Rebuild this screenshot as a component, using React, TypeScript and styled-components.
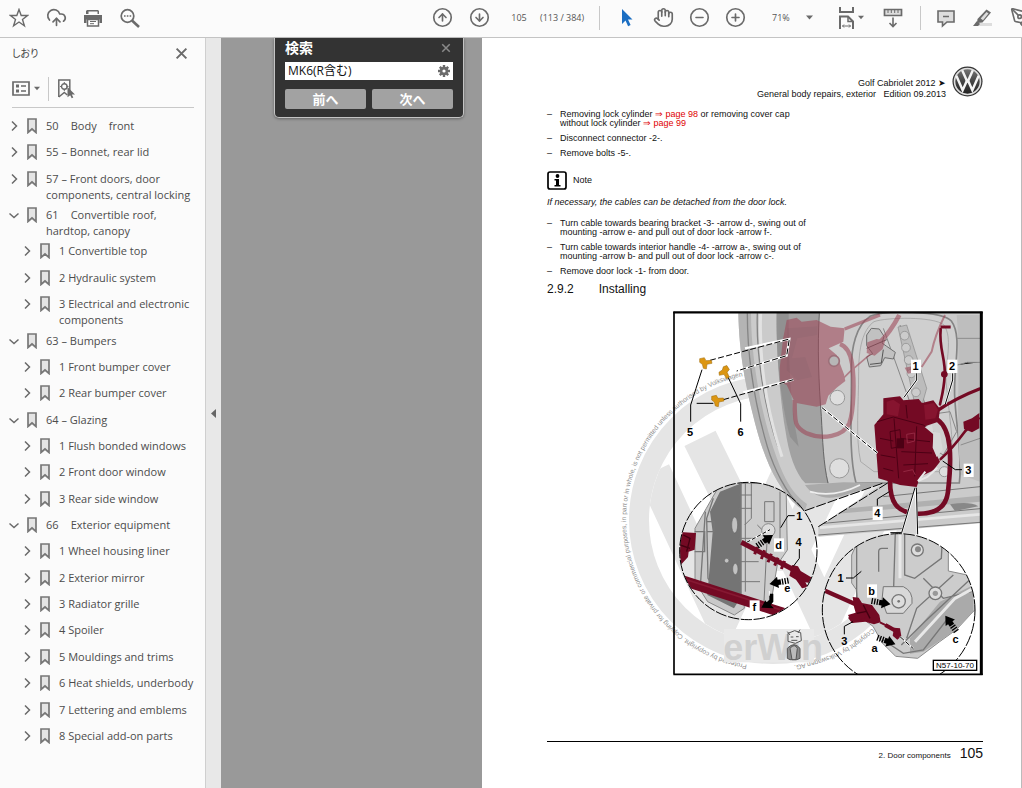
import React from 'react';
import styled, { createGlobalStyle } from 'styled-components';
import { CircleArrowDown, CircleArrowUp, CircleMinus, CirclePlus, CloudUpload, Hand, PenTool } from 'lucide-react';

const ui = '"Open Sans", "Noto Sans CJK JP", sans-serif';
const doc = '"Liberation Sans", Arial, sans-serif';
const ink = '#6a6a6a';

const Global = createGlobalStyle`
  *, *::before, *::after { box-sizing: border-box; }
  body { margin: 0; background: #999; font-family: ${ui}; }
  button, input, select { font: inherit; color: inherit; border: 0; padding: 0; margin: 0; background: none; }
  ul, p, h1, h2, figure { margin: 0; padding: 0; }
  ul { list-style: none; }
  svg { display: block; flex: none; }
`;

const App = styled.div`
  min-height: 100vh;
  display: flex;
  flex-direction: column;
  overflow: hidden;
`;

/* ---------- toolbar ---------- */

const Toolbar = styled.header`
  display: flex;
  align-items: center;
  height: 38px;
  background: #fbfbfb;
  border-bottom: 1px solid #c4c4c4;
  color: ${ink};
  font-size: 9px;
`;

const ToolGroup = styled.div<{ $gap?: number; $push?: boolean }>`
  display: flex;
  align-items: center;
  gap: ${p => p.$gap ?? 0}px;
  margin-left: ${p => (p.$push ? 'auto' : '0')};
  padding-bottom: 2px;
`;

const MainTools = styled(ToolGroup)`
  padding-left: 1px;
`;

const ToolButton = styled.button<{ $width?: number }>`
  display: flex;
  align-items: center;
  justify-content: center;
  gap: 2px;
  width: ${p => p.$width ?? 36}px;
  height: 34px;
  flex: none;
  overflow: hidden;
`;

const CutButton = styled(ToolButton)`
  width: 22px;
  padding-left: 10px;
  justify-content: flex-start;
`;

const PageInput = styled.input`
  width: 42px;
  text-align: center;
  color: #555;
`;

const PageCount = styled.span`
  width: 44px;
  white-space: nowrap;
  color: #555;
`;

const Divider = styled.span<{ $before: number; $after: number }>`
  width: 1px;
  height: 24px;
  margin: 0 ${p => p.$after}px 0 ${p => p.$before}px;
  background: #c8c8c8;
`;

const ZoomField = styled.label`
  display: flex;
  align-items: center;
  width: 64px;
  margin-right: 15px;
  padding-left: 19px;
`;

const ZoomSelect = styled.select`
  appearance: none;
  width: 34px;
  color: #555;
`;

/* ---------- bookmarks panel ---------- */

const Main = styled.main`
  flex: 1;
  display: flex;
`;

const Panel = styled.aside`
  width: 206px;
  flex: none;
  display: flex;
  flex-direction: column;
  background: #fbfbfb;
  border-right: 1px solid #cfcfcf;
  padding-bottom: 36px;
`;

const PanelHead = styled.div`
  display: flex;
  align-items: center;
  justify-content: space-between;
  height: 30px;
  padding: 0 17px 0 12px;
`;

const PanelTitle = styled.h2`
  font-size: 10px;
  font-weight: 400;
  line-height: 16px;
  color: #444;
  font-feature-settings: 'palt';
`;

const PanelTools = styled.div`
  display: flex;
  align-items: center;
  height: 40px;
  margin: 0 11px 8px 12px;
  padding-top: 2px;
  border-bottom: 1px solid #c8c8c8;
`;

const PlainButton = styled.button`
  display: flex;
  align-items: center;
  gap: 4px;
`;

const Bookmarks = styled.ul`
  flex: 1;
  display: flex;
  flex-direction: column;
  justify-content: space-between;
`;

const Row = styled.li<{ $level: number }>`
  display: flex;
  align-items: flex-start;
  min-height: 26px;
  padding: 2px 8px 2px ${p => 8 + p.$level * 13}px;
`;

const Toggle = styled.button`
  display: flex;
  align-items: center;
  justify-content: center;
  width: 12px;
  height: 16px;
  margin-right: 7px;
  flex: none;
`;

const BookmarkLink = styled.a`
  display: flex;
  gap: 9px;
  font-size: 11px;
  line-height: 16px;
  color: #4c4c4c;
  text-decoration: none;
`;

const Collapser = styled.button`
  width: 15px;
  flex: none;
  display: flex;
  align-items: center;
  justify-content: center;
  background: #e8e8e8;
`;

/* ---------- document view ---------- */

const Viewer = styled.section`
  flex: 1;
  display: grid;
  grid-template-columns: minmax(0, 29fr) minmax(0, 60fr);
  background: #999;
`;

const Backdrop = styled.div`
  display: flex;
  justify-content: flex-end;
  align-items: flex-start;
  padding-right: 18px;
`;

const SearchBox = styled.form`
  width: 190px;
  padding: 0 10px 8px;
  background: #333;
  border: 1px solid #c4c4c4;
  border-top: 0;
  border-radius: 0 0 5px 5px;
  box-shadow: 0 1px 3px rgba(0, 0, 0, 0.35);
`;

const SearchHead = styled.div`
  display: flex;
  align-items: center;
  justify-content: space-between;
  height: 24px;
  padding: 0 2px 4px 0;
  color: #fff;
  font-size: 14px;
  font-weight: 700;
  line-height: 20px;
`;

const SearchField = styled.label`
  display: flex;
  align-items: center;
  height: 18px;
  padding: 0 3px;
  background: #fff;
`;

const SearchInput = styled.input`
  flex: 1;
  min-width: 0;
  color: #111;
  font-size: 12px;
  line-height: 18px;
  outline: 0;
`;

const SearchActions = styled.div`
  display: grid;
  grid-template-columns: 1fr 1fr;
  gap: 6px;
  margin-top: 9px;
`;

const SearchButton = styled.button`
  height: 20px;
  border-radius: 2px;
  background: #a2a2a2;
  color: #fff;
  font-size: 13px;
  font-weight: 700;
  line-height: 18px;
`;

const Page = styled.article`
  display: flex;
  flex-direction: column;
  padding: 28px 38px 21px 65px;
  background: #fff;
  border-right: 1px solid #bbb;
  color: #111;
  font-family: ${doc};
  font-size: 9px;
  line-height: 9px;
`;

const PageHead = styled.div`
  display: flex;
  justify-content: flex-end;
  gap: 6px;
  height: 34px;
  margin-bottom: 10px;
`;

const PageTitle = styled.p`
  padding-top: 12px;
  text-align: right;
  line-height: 11px;
`;

const Steps = styled.ul`
  display: flex;
  flex-direction: column;
  gap: 6px;
`;

const Step = styled.li`
  display: flex;
  &::before {
    content: '–';
    width: 13px;
    flex: none;
  }
`;

const PageLink = styled.a`
  color: #e00000;
  text-decoration: none;
`;

const Note = styled.div`
  display: flex;
  align-items: center;
  gap: 6px;
  margin: 13px 0 7px;
`;

const Remark = styled.p`
  margin-bottom: 12px;
  font-style: italic;
  line-height: 10px;
`;

const Heading = styled.h1`
  display: flex;
  gap: 25px;
  margin: 6px 0 14px;
  font-size: 12px;
  font-weight: 400;
  line-height: 14px;
`;

const Figure = styled.figure`
  width: 100%;
  max-width: 364px;
  margin-left: auto;
  margin-bottom: 24px;
`;

const PageFoot = styled.footer`
  display: flex;
  justify-content: flex-end;
  align-items: baseline;
  gap: 9px;
  margin-top: auto;
  border-top: 1px solid #000;
  font-size: 8px;
  line-height: 22px;
`;

const PageNumber = styled.span`
  font-size: 14px;
`;

/* ---------- icons ---------- */

const Caret = ({ size = 7 }: { size?: number }) => (
  <svg width={size} height="5" viewBox="0 0 7 5"><path d="M0 .5h7L3.5 4.5z" fill={ink} /></svg>
);

const StarIcon = () => (
  <svg width="20" height="20" viewBox="0 0 20 20" fill="none" stroke={ink} strokeWidth="1.4">
    <path d="M10 1.500l2.200 6h6.300l-5 3.900 1.900 6.400L10 14l-5.400 3.800 1.900-6.400-5-3.900h6.300z" />
  </svg>
);

const PrintIcon = () => (
  <svg width="20" height="20" viewBox="0 0 20 20">
    <path d="M4 2h11l1 1v3H3V3z" fill={ink} /><path d="M5.500 3.500h9V6h-9z" fill="#fbfbfb" />
    <path d="M1 7h18v8h-2.500v-3.500h-13V15H1z" fill={ink} />
    <path d="M4.500 11.500h11v6.500h-11z" fill="#fff" stroke={ink} strokeWidth="1.500" />
    <path d="M7 13.500h6M7 15.700h4" stroke={ink} />
  </svg>
);

const FindIcon = () => (
  <svg width="20" height="20" viewBox="0 0 20 20" fill="none" stroke={ink}>
    <circle cx="7.500" cy="8" r="6.300" strokeWidth="1.700" />
    <path d="M12 12.500l7 6.500" strokeWidth="2.600" />
    <path d="M4 8h7.500" strokeWidth="1.600" strokeDasharray="1.600 1.200" />
  </svg>
);

const ArrowIcon = () => (
  <svg width="14" height="20" viewBox="0 0 14 20">
    <path d="M2 1l10.500 10.500H8l2.600 5.500-2.500 1.200-2.600-5.600L2 16z" fill="#1b6ec2" />
  </svg>
);

const FitIcon = () => (
  <svg width="18" height="22" viewBox="0 0 18 22" fill="none" stroke={ink} strokeWidth="2">
    <path d="M2 0v5h13V0" />
    <path d="M2 22V9.500h8l5 5V22" /><path d="M10 9.500v5h5" strokeWidth="1.500" />
    <path d="M4.500 19h8M6 17.500L4.500 19 6 20.500M11 17.500l1.500 1.500-1.500 1.500" strokeWidth="1" />
  </svg>
);

const RulerIcon = () => (
  <svg width="20" height="20" viewBox="0 0 20 20" fill="none" stroke={ink}>
    <path d="M1.500 1.500h17v6h-17z" fill="#ddd" strokeWidth="1.700" />
    <path d="M5 2v3M8.300 2v3M11.700 2v3M15 2v3" />
    <path d="M10 9.500v9M6.500 15l3.500 3.500 3.500-3.500" strokeWidth="1.600" />
  </svg>
);

const CommentIcon = () => (
  <svg width="20" height="20" viewBox="0 0 20 20">
    <path d="M2 3h16v11h-7l-4.500 4v-4H2z" fill="#ddd" stroke={ink} strokeWidth="1.600" />
    <path d="M7 8.500h6" stroke={ink} strokeWidth="1.500" />
  </svg>
);

const MarkerIcon = () => (
  <svg width="20" height="20" viewBox="0 0 20 20">
    <path d="M5 15h15v3H3z" fill="#ddd" />
    <path d="M14.500 1.500L19 4.500l-8.500 10-5.500.5.500-4z" fill={ink} />
    <path d="M14.500 4l2 1.500-5.500 6.700-2.300-1.700z" fill="#ddd" />
    <path d="M1 18l4-5 3 3-2 2z" fill={ink} />
  </svg>
);

const CrossIcon = ({ size, color }: { size: number; color: string }) => (
  <svg width={size} height={size} viewBox="0 0 12 12" stroke={color} strokeWidth="1.800">
    <path d="M1.500 1.500l9 9M10.500 1.500l-9 9" />
  </svg>
);

const OptionsIcon = () => (
  <svg width="18" height="15" viewBox="0 0 18 15" stroke={ink}>
    <path d="M1 1h16v13H1z" fill="none" strokeWidth="1.700" />
    <path d="M4 5h3M4 10h3" strokeWidth="3" /><path d="M9 5h5M9 10h5" strokeWidth="1.500" />
  </svg>
);

const FindBookmarkIcon = () => (
  <svg width="18" height="20" viewBox="0 0 18 20">
    <path d="M1.800 18V1h11v13" fill="none" stroke={ink} strokeWidth="1.500" />
    <path d="M1.800 18l5.500-4.500 3 2.500" fill="none" stroke={ink} strokeWidth="1.500" />
    <circle cx="7.300" cy="7.500" r="2.800" fill="none" stroke={ink} strokeWidth="1.400" />
    <path d="M7.300 3v2M7.300 10v2M3 7.500h2M9.500 7.500h2" stroke={ink} />
    <path d="M10.500 8l7.500 7.500h-3.200l1.500 3-1.600.8-1.500-3-2.700 2z" fill={ink} />
  </svg>
);

const BookmarkIcon = () => (
  <svg width="10" height="16" viewBox="0 0 10 16">
    <path d="M1 1h8v13.500L5 11l-4 3.500z" fill="#e4e4e4" stroke="#777" strokeWidth="1.700" />
  </svg>
);

const Chevron = ({ open }: { open?: boolean }) => (
  <svg width="12" height="12" viewBox="0 0 12 12" fill="none" stroke={ink} strokeWidth="1.500">
    <path d={open ? 'M1.500 4.500L6 8.500l4.500-4' : 'M4 1.500L8.500 6 4 10.500'} />
  </svg>
);

const GearIcon = () => (
  <svg width="12" height="12" viewBox="0 0 12 12">
    <g stroke={ink} strokeWidth="2.400"><path d="M6 0v12M0 6h12M1.800 1.800l8.400 8.400M10.200 1.800l-8.400 8.400" /></g>
    <circle cx="6" cy="6" r="4.200" fill={ink} /><circle cx="6" cy="6" r="1.600" fill="#fff" />
  </svg>
);

const InfoIcon = () => (
  <svg width="20" height="19" viewBox="0 0 20 19">
    <rect x="1" y="1" width="18" height="17" rx="2" fill="#fff" stroke="#000" strokeWidth="1.700" />
    <circle cx="10.500" cy="5" r="1.900" />
    <path d="M7.500 8h4.500v6h1.500v1.600h-6V14H9V9.600H7.500z" />
  </svg>
);

const VwLogo = () => (
  <svg width="31" height="31" viewBox="0 0 32 32">
    <defs>
      <linearGradient id="chrome" x1="0" y1="0" x2="0" y2="1">
        <stop offset="0" stopColor="#777" /><stop offset=".5" stopColor="#444" /><stop offset="1" stopColor="#222" />
      </linearGradient>
    </defs>
    <circle cx="16" cy="16" r="15.500" fill="#333" />
    <circle cx="16" cy="16" r="13.400" fill="url(#chrome)" stroke="#ddd" strokeWidth="1.700" />
    <g fill="none" stroke="#f4f4f4" strokeWidth="2.500">
      <path d="M10.500 4.500l5 11h1l5-11" /><path d="M4.500 10l6.500 15 4-9h2l4 9 6.500-15" />
    </g>
  </svg>
);

/* ---------- door lock drawing ---------- */

type LabelProps = { x: number; y: number; boxed?: boolean; children: React.ReactNode };

const Label = ({ x, y, boxed, children }: LabelProps) => (
  <g>
    {boxed && <rect x={x - 14} y={y - 20} width="30" height="40" fill="#fff" />}
    <text x={x} y={y + 12} textAnchor="middle" fontFamily={doc} fontWeight="700" fontSize="33">{children}</text>
  </g>
);

const Bolt = ({ x, y, turn = 0 }: { x: number; y: number; turn?: number }) => (
  <g transform={`translate(${x} ${y}) rotate(${turn})`} fill="#dc9612" stroke="#9c6808" strokeWidth="1.500">
    <path d="M-17-13l14-3 5 9 16-1 2 9-15 3-2 14-9-2-3-12-8-6z" />
  </g>
);

const Arrow = ({ x, y, turn }: { x: number; y: number; turn: number }) => (
  <g transform={`translate(${x} ${y}) rotate(${turn})`}>
    <path d="M28 0L2-17v9h-9V8h9v9z" /><path d="M-12-9V9M-20-9V9M-28-9V9" stroke="#000" strokeWidth="4" />
  </g>
);

const Watermark = () => (
  <g>
    <g fill="none" stroke="#e5e5e5">
      <circle cx="309" cy="645" r="402" strokeWidth="60" />
      <g strokeWidth="104" clipPath="url(#badge)">
        <path d="M90 400l170 345h100l170-345" /><path d="M-50 500l205 440 154-330 154 330 205-440" />
      </g>
    </g>
    <g fill="#8e8e8e" fontFamily={doc} fontSize="20">
      <text>
        <textPath href="#arc">Protected by copyright. Copying for private or commercial purposes, in part or in whole, is not permitted unless authorised by Volkswagen AG.</textPath>
      </text>
      <text textAnchor="end">
        <textPath href="#arcEnd" startOffset="100%">Copyright by Volkswagen AG.</textPath>
      </text>
    </g>
    <rect x="162" y="972" width="270" height="100" fill="#e9e9e9" />
    <text x="160" y="1066" fontFamily={doc} fontWeight="700" fontSize="108" fill="#d0d0d0">erWin</text>
  </g>
);

const Robot = () => (
  <g stroke="#555" strokeWidth="3" fill="#e8e8e8">
    <path d="M354 985l20-8 18 6 2 24-18 8-22-6z" /><path d="M360 990l-8-10M384 984l6-10" />
    <path d="M362 996h8M378 995h8M364 1006h18" fill="none" />
    <path d="M352 1030q20-22 38 0v30l-10 4h-20l-8-4z" fill="#8b8b8b" />
    <path d="M360 1030q14-16 22 0l-4 34h-12z" fill="#bbb" />
  </g>
);

const Door = () => (
  <g>
    <path d="M205 25H930V655L445 695V665L640 535 405 617 385 605C330 560 290 480 262 380 225 240 208 150 205 25z" fill="#cbcbcb" />
    <path d="M205 25h38c0 130 30 330 96 480 20 44 45 75 72 92l-6 20-20-12C330 560 290 480 262 380 225 240 208 150 205 25z" fill="#b4b4b4" />
    <path d="M232 25c0 110 16 250 60 400 20 66 56 140 100 180M262 25c-4 120 20 280 62 400" fill="none" stroke="#858585" strokeWidth="4" />
    <path d="M272 25c-6 160 24 310 64 430" fill="none" stroke="#e2e2e2" strokeWidth="9" />
    <path d="M320 25h128c-6 90-2 200 6 300 4 80 6 150 22 210h-70c-30-30-50-90-60-160-18-110-28-250-26-350z" fill="#a2a2a2" />
    <path d="M320 25h36c0 130 2 260 30 400l-26-30c-26-100-42-230-40-370z" fill="#929292" />
    <path d="M448 25c-6 100-2 210 6 310 4 70 6 140 20 200" fill="none" stroke="#666" strokeWidth="3" />
    <path d="M600 34c-40 26-58 90-56 170 2 100-10 240 14 330h310c10-80-10-170-14-260-4-90 24-180-10-226-26-30-200-34-244-14z" fill="#cfcfcf" stroke="#858585" strokeWidth="5" />
    <path d="M612 50c-34 24-46 80-46 150 0 100-10 200 6 270l40 30h200c30-10 40-60 30-140l-14-130c0-70 20-130-6-170-30-26-170-24-210-10z" fill="none" stroke="#999" strokeWidth="2" />
    <path d="M860 30h70v500l-56-20c-20-120 0-320-14-480z" fill="#bebebe" /><path d="M860 100h70M862 180l30-8h38M872 420l58-20" stroke="#8c8c8c" strokeWidth="3" />
    <path d="M640 70l90 250M690 60l76 240M770 330l70-10 20 60-40 70-50-30z" fill="none" stroke="#888" strokeWidth="3" />
    <path d="M684 66l26-6 60 190-14 50-24-14z" fill="#bcbcbc" stroke="#8a8a8a" strokeWidth="2" />
    {[[704, 92], [708, 128], [716, 165], [724, 205], [738, 262]].map(([x, y]) => (
      <circle key={y} cx={x} cy={y} r="13" fill="#ccc" stroke="#888" strokeWidth="2" />
    ))}
    <path d="M590 90l14-20 24 2 14 22-6 20 14 10 26 18-6 20-26-4-12 24-34 4-8-30 18-10-18-24z" fill="#c2c2c2" stroke="#6f6f6f" strokeWidth="3" />
    <path d="M590 130l60-26M600 178l34-4 6-40" fill="none" stroke="#555" strokeWidth="3" />
    <g fill="#dedede" stroke="#999" strokeWidth="3"><circle cx="508" cy="490" r="29" /><circle cx="502" cy="278" r="22" /><circle cx="823" cy="500" r="15" /></g>
    <path d="M405 540c20 30 60 50 120 30l115-36-120-2z" fill="#aaa" /><path d="M420 560q70 20 150-20" fill="none" stroke="#eee" strokeWidth="5" />
    <path d="M535 610l395-38v18l-430 36z" fill="#b0b0b0" /><path d="M462 655l468-44M445 690l485-38M640 575l290-30" fill="none" stroke="#777" strokeWidth="3" />
    <path d="M450 668l480-40" stroke="#e6e6e6" strokeWidth="8" />
    <path d="M840 598q60-10 85 6l-70 14z" fill="#888" />
  </g>
);

const GhostLock = () => (
  <g opacity=".58">
    <path d="M350 45l30-7 15 12 45-5 42 20 42 5-4 40-44 20 24 20 22 58 4 20-26 20-25 24-8 26-27 7-65-12-25-53-20-10-1-40 10-88z" fill="#9e4858" />
    <path d="M352 70l90-6v26l-60 10-16 60 40-4 20 60-44 10-32-30" fill="#934354" />
    <g fill="none" stroke="#9e4858">
      <path d="M374 285c0 70 0 82 36 100 46 20 110 10 128-30 14-40 16-130 8-180-6-36-20-52-36-58" strokeWidth="13" />
      <path d="M524 72q50-20 106-42" strokeWidth="10" /><path d="M688 30q-26 50-60 84" strokeWidth="14" />
      <path d="M610 140l-70 60-40 40" strokeWidth="5" /><path d="M825 30q-30 60-40 110l-30 46" strokeWidth="6" />
    </g>
    <path d="M592 112l28-10 26 4-8 26-24 20-24-8zM704 188l40-8 8 18-38 8z" fill="#9e4858" />
    <circle cx="492" cy="168" r="16" fill="#aaa" stroke="#7a3040" strokeWidth="5" />
  </g>
);

const Lock = () => (
  <g>
    <g fill="none" stroke="#740a24" strokeLinecap="round">
      <path d="M804 345c40 30 42 110 30 215-6 50-40 68-94 66-60-4-80-34-80-98" strokeWidth="14" />
      <path d="M812 66h30" strokeWidth="9" strokeLinecap="butt" /><path d="M812 72c-6 60 16 90 12 140-2 40-8 60-14 86" strokeWidth="8" />
      <path d="M800 318q60-40 128-66" strokeWidth="10" /><path d="M926 340l-40 38q-40 54-74 84" strokeWidth="8" />
    </g>
    <circle cx="823" cy="208" r="10" fill="#740a24" />
    <path d="M880 350l26-10 22-16v46l-22 12-24-10z" fill="#740a24" />
    <path d="M640 280l50-6 10 12 46-4 10 12 34-8 20 26-5 38-40 14 25 16v50l20 40-20 26-40 20-10 30-50-6-30-10-35-10-12-160 27-32z" fill="#740a24" />
    <path d="M650 290l20-6 20 14-6 36-34-6zM762 300l30-6 12 20-8 26-30 4z" fill="#86142f" />
    <path d="M622 350l48-14 90 24 26 20M672 340l14 180M630 400l40 8M632 450l44 8M690 400l90 10M694 440l92 4M700 480l74-4M640 490l30 8M740 364l-6 150M708 300l4 40M660 380l30-6 4 50-30 6z" fill="none" stroke="#4c0014" strokeWidth="3" />
    <path d="M680 400h22v30h-22z" fill="#4c0014" /><path d="M710 388l24-4v24l-22 6zM700 500l28-6 8 16" fill="none" stroke="#942842" strokeWidth="3" />
    <path d="M764 366l22-6 4 20 20 4 8 50-18 22-12-28 2-40z" fill="#d8d8d8" /><path d="M766 500l-22 28 28-12 30-28" fill="none" stroke="#e8e8e8" strokeWidth="6" />
  </g>
);

const LeftDetail = () => (
  <g>
    <g clipPath="url(#leftLens)">
      <path d="M75 670l34-60 40-70 60-10 14 380-30 20-80-40-38-60z" fill="#c9c9c9" stroke="#888" strokeWidth="3" />
      <path d="M150 560l76-30v60l-10 280-24 40-80-40 16-190-8-60z" fill="#747474" />
      <path d="M130 580l-20 60 4 180 20 30M106 620l-14 210M112 650h20v30h-20M74 680h30v60h-30" fill="none" stroke="#777" strokeWidth="4" />
      <path d="M214 535h134l4 200-30 44-20 120-50-10-38-20z" fill="#cdcdcd" stroke="#888" strokeWidth="3" />
      <path d="M226 530v330M244 530v110l-20 20M284 590h28v60h-28zM206 570h40M206 610h40M206 700h50M206 770h60M206 830h64M330 560v160M262 660l30 30-10 200" fill="none" stroke="#777" strokeWidth="3" />
      <circle cx="295" cy="676" r="20" fill="#ddd" stroke="#888" strokeWidth="3" />
      <g fill="#c2c2c2" stroke="#666" strokeWidth="2"><ellipse cx="194" cy="660" rx="9" ry="24" /><circle cx="170" cy="767" r="7" /><ellipse cx="196" cy="792" rx="8" ry="17" /></g>
      <path d="M20 680l58 4-4 50-18 6-2 16-24 26-20-10z" fill="#740a24" /><path d="M40 690l20 10-10 40M30 720l30 10" fill="none" stroke="#430010" strokeWidth="4" />
      <path d="M30 824L340 924" stroke="#740a24" strokeWidth="31" /><path d="M30 818L330 914" stroke="#861832" strokeWidth="5" />
      <path d="M214 712l160 84" stroke="#740a24" strokeWidth="15" />
      <path d="M262 726l-8 22M284 736l-10 26M304 746l-10 26M324 758l-10 24M344 768l-10 24" stroke="#740a24" strokeWidth="9" />
      <path d="M366 780l18 4 8 14 34 20-6 16-14-2 8 14-18 4-18-26-20-12z" fill="#740a24" />
    </g>
    <circle cx="235" cy="738" r="206" fill="none" stroke="#000" strokeWidth="3" strokeDasharray="34 5" />
    <path d="M230 712l70-38" stroke="#fff" strokeWidth="5" /><path d="M230 712l70-38" stroke="#000" strokeWidth="3" strokeDasharray="12 6" />
    <Arrow x={286} y={706} turn={-35} /><Arrow x={326} y={832} turn={170} />
    <path d="M310 866v24l-8 10 10 10-38-2 12-22 4 6 8-8v-18z" /><path d="M298 858v14" stroke="#fff" strokeWidth="3" />
  </g>
);

const RightDetail = () => (
  <g>
    <g clipPath="url(#rightLens)">
      <path d="M545 750l16-36 60-36h214v120l76 16 4 100-56 60-50 36-66 50-66-6-40-40-28-50-40-30-10-80-14-20z" fill="#cccccc" stroke="#8a8a8a" strokeWidth="3" />
      <path d="M720 1000l90-110 100-50v80l-60 60-90 60-40 6z" fill="#aaa" />
      <path d="M676 680l-6 200M704 680v130l30 10 80-60 4-80M560 720v160l20 60M626 800v-60q0-10 10-10h18M850 810l-110 100-30 90M904 820l-140 130-70 70M760 820l60 60 84-20M640 1005l60 40 60-10 70-90" fill="none" stroke="#777" strokeWidth="4" />
      <path d="M690 680v140M735 1010l120-130 55-30" fill="none" stroke="#e8e8e8" strokeWidth="9" />
      <path d="M640 845h60q30 14 26 50l-26 30h-50l-14-40z" fill="#d8d8d8" stroke="#777" strokeWidth="3" />
      <g stroke="#777" strokeWidth="4" fill="#ddd"><circle cx="742" cy="735" r="18" /><circle cx="796" cy="865" r="19" /><circle cx="686" cy="889" r="20" /></g>
      <circle cx="744" cy="733" r="9" fill="#888" /><circle cx="796" cy="865" r="8" fill="#999" /><circle cx="686" cy="889" r="4" fill="#777" />
      <path d="M455 853l100 44" stroke="#740a24" strokeWidth="13" />
      <path d="M548 876l18 2 10 16 30 6 22 30 4 22-20 6-26-8-40 4-12-16 24-12-6-20z" fill="#740a24" />
      <path d="M534 930l40-12 16 18-44 18z" fill="#740a24" /><path d="M580 900l20 40M560 925l30-6" stroke="#430010" strokeWidth="4" />
      <path d="M630 952l56 28" stroke="#740a24" strokeWidth="6" /><path d="M646 960l36 20" stroke="#740a24" strokeWidth="12" />
      <path d="M672 968l18 2 4 24-12 10-14-12z" fill="#740a24" />
    </g>
    <circle cx="686" cy="915" r="229" fill="none" stroke="#000" strokeWidth="3" strokeDasharray="34 5" clipPath="url(#frame)" />
    <path d="M690 995l40 36" stroke="#fff" strokeWidth="5" /><path d="M690 995l40 36" stroke="#000" strokeWidth="3" strokeDasharray="16 6" />
    <Arrow x={634} y={893} turn={10} /><Arrow x={650} y={1008} turn={20} /><Arrow x={842} y={955} turn={-125} />
  </g>
);

const Leaders = () => (
  <g fill="none" strokeWidth="3">
    <g stroke="#fff" strokeWidth="7"><path d="M225 130l133-28-8 50-130 40M220 262l150-38M456 308l166 136M740 205v20l-38 52M848 205v20l-22 72" /></g>
    <g stroke="#000">
      <path d="M120 166l238-64-8 50-150 46M160 284l210-60" strokeDasharray="18 7" />
      <path d="M96 194L78 250 62 300v50M80 295h50M172 212l40 84v54" />
      <path d="M456 308l166 136" strokeDasharray="16 6" /><path d="M740 205v20l-38 52M848 205v20l-22 72M876 494h-20l-38-26M622 602v-20l36-22" />
      <path d="M374 632h-20l-22 36M388 732v28l-18 24M528 819h22l24-20M523 988v-24l26-14" />
      <path d="M405 617l235-83" strokeDasharray="30 6" /><path d="M445 665L656 532" strokeDasharray="30 6" />
    </g>
    <path d="M737 548l-42 135 48 4z" fill="#d6d6d6" stroke="none" /><path d="M737 548l-42 135M737 548l6 138" stroke="#fff" strokeWidth="6" />
    <path d="M735 548l-40 135h-34M739 548l4 140" stroke="#000" />
  </g>
);

const DoorLockDrawing = () => (
  <svg width="100%" viewBox="-153 15 1092 1104" role="img" aria-label="Door lock assembly">
    <defs>
      <clipPath id="badge"><circle cx="309" cy="645" r="372" /></clipPath>
      <clipPath id="leftLens"><circle cx="235" cy="738" r="205" /></clipPath>
      <clipPath id="rightLens"><circle cx="686" cy="915" r="228" /></clipPath>
      <clipPath id="frame"><path d="M12 22h922v1086H12z" /></clipPath>
      <path id="arc" d="M231 1079A441 441 0 0 1 309 204 441 441 0 0 1 700 440" />
      <path id="arcEnd" d="M750 645A441 441 0 0 1 372 1081" />
    </defs>
    <Watermark />
    <Robot />
    <g clipPath="url(#frame)">
      <Door />
      <GhostLock />
    </g>
    <Lock />
    <LeftDetail />
    <RightDetail />
    <Leaders />
    <Bolt x={106} y={174} /><Bolt x={164} y={202} turn={70} /><Bolt x={142} y={287} />
    <Label x={60} y={380}>5</Label><Label x={212} y={380}>6</Label>
    <Label x={737} y={184} boxed>1</Label><Label x={846} y={184} boxed>2</Label>
    <Label x={895} y={496} boxed>3</Label><Label x={622} y={625} boxed>4</Label>
    <Label x={388} y={632}>1</Label><Label x={386} y={712}>4</Label>
    <Label x={326} y={720} boxed>d</Label><Label x={352} y={848}>e</Label><Label x={253} y={906} boxed>f</Label>
    <Label x={512} y={819}>1</Label><Label x={605} y={858} boxed>b</Label><Label x={523} y={1008}>3</Label>
    <Label x={614} y={1030}>a</Label><Label x={857} y={1003}>c</Label>
    <rect x="790" y="1066" width="130" height="30" fill="#fff" stroke="#000" strokeWidth="4" />
    <text x="855" y="1090" textAnchor="middle" fontFamily={doc} fontSize="24">N57-10-70</text>
    <path d="M12 20V1108M10 1108H938" stroke="#000" strokeWidth="5" /><path d="M10 22H938" stroke="#000" strokeWidth="7" /><path d="M934 20V1110" stroke="#000" strokeWidth="9" />
  </svg>
);

/* ---------- content ---------- */

type Bookmark = { text: string; level: 0 | 1; open?: boolean };

const bookmarks: Bookmark[] = [
  { level: 0, text: '50\u2003\u200ABody\u2003\u200Afront' },
  { level: 0, text: '55 – Bonnet, rear lid' },
  { level: 0, text: '57 – Front doors, door components, central locking' },
  { level: 0, text: '61\u2003\u200AConvertible roof, hardtop, canopy', open: true },
  { level: 1, text: '1 Convertible top' },
  { level: 1, text: '2 Hydraulic system' },
  { level: 1, text: '3 Electrical and electronic components' },
  { level: 0, text: '63 – Bumpers', open: true },
  { level: 1, text: '1 Front bumper cover' },
  { level: 1, text: '2 Rear bumper cover' },
  { level: 0, text: '64 – Glazing', open: true },
  { level: 1, text: '1 Flush bonded windows' },
  { level: 1, text: '2 Front door window' },
  { level: 1, text: '3 Rear side window' },
  { level: 0, text: '66\u2003\u200AExterior equipment', open: true },
  { level: 1, text: '1 Wheel housing liner' },
  { level: 1, text: '2 Exterior mirror' },
  { level: 1, text: '3 Radiator grille' },
  { level: 1, text: '4 Spoiler' },
  { level: 1, text: '5 Mouldings and trims' },
  { level: 1, text: '6 Heat shields, underbody' },
  { level: 1, text: '7 Lettering and emblems' },
  { level: 1, text: '8 Special add-on parts' },
];

const round = { size: 21, strokeWidth: 1.9 };

export default function PdfReader() {
  return (
    <App>
      <Global />
      <Toolbar>
        <MainTools $gap={1}>
          <ToolButton aria-label="Star"><StarIcon /></ToolButton>
          <ToolButton aria-label="Upload"><CloudUpload {...round} /></ToolButton>
          <ToolButton aria-label="Print"><PrintIcon /></ToolButton>
          <ToolButton aria-label="Find"><FindIcon /></ToolButton>
        </MainTools>
        <ToolGroup $push>
          <ToolButton $width={37} aria-label="Previous page"><CircleArrowUp {...round} /></ToolButton>
          <ToolButton $width={37} aria-label="Next page"><CircleArrowDown {...round} /></ToolButton>
          <PageInput aria-label="Page" defaultValue="105" />
          <PageCount>(113 / 384)</PageCount>
          <Divider $before={15} $after={9} />
          <ToolButton aria-label="Select"><ArrowIcon /></ToolButton>
          <ToolButton aria-label="Pan"><Hand {...round} /></ToolButton>
          <ToolButton aria-label="Zoom out"><CircleMinus {...round} /></ToolButton>
          <ToolButton aria-label="Zoom in"><CirclePlus {...round} /></ToolButton>
          <ZoomField>
            <ZoomSelect aria-label="Zoom" defaultValue="71%"><option>71%</option><option>100%</option></ZoomSelect>
            <Caret />
          </ZoomField>
          <ToolButton $width={37} aria-label="Fit width"><FitIcon /><Caret size={6} /></ToolButton>
        </ToolGroup>
        <ToolGroup>
          <ToolButton $width={48} aria-label="Measure"><RulerIcon /></ToolButton>
          <Divider $before={3} $after={7} />
          <ToolButton aria-label="Comment"><CommentIcon /></ToolButton>
          <ToolButton aria-label="Highlight"><MarkerIcon /></ToolButton>
          <CutButton aria-label="Sign"><PenTool {...round} /></CutButton>
        </ToolGroup>
      </Toolbar>

      <Main>
        <Panel>
          <PanelHead>
            <PanelTitle>しおり</PanelTitle>
            <PlainButton aria-label="Close panel"><CrossIcon size={13} color={ink} /></PlainButton>
          </PanelHead>
          <PanelTools>
            <PlainButton aria-label="Options"><OptionsIcon /><Caret size={6} /></PlainButton>
            <Divider $before={8} $after={8} />
            <PlainButton aria-label="Find bookmark"><FindBookmarkIcon /></PlainButton>
          </PanelTools>
          <Bookmarks>
            {bookmarks.map(b => (
              <Row key={b.text} $level={b.level}>
                <Toggle aria-label="Toggle"><Chevron open={b.open} /></Toggle>
                <BookmarkLink href="#page"><BookmarkIcon /><span>{b.text}</span></BookmarkLink>
              </Row>
            ))}
          </Bookmarks>
        </Panel>
        <Collapser aria-label="Collapse panel">
          <svg width="5" height="9" viewBox="0 0 5 9"><path d="M5 0v9L0 4.500z" fill="#666" /></svg>
        </Collapser>

        <Viewer>
          <Backdrop>
            <SearchBox>
              <SearchHead>
                検索
                <PlainButton type="button" aria-label="Close search"><CrossIcon size={10} color="#8a8a8a" /></PlainButton>
              </SearchHead>
              <SearchField>
                <SearchInput aria-label="検索" defaultValue="MK6(R含む)" />
                <GearIcon />
              </SearchField>
              <SearchActions>
                <SearchButton type="button">前へ</SearchButton>
                <SearchButton type="button">次へ</SearchButton>
              </SearchActions>
            </SearchBox>
          </Backdrop>

          <Page id="page">
            <PageHead>
              <PageTitle>Golf Cabriolet 2012 ➤<br />General body repairs, exterior &nbsp; Edition 09.2013</PageTitle>
              <VwLogo />
            </PageHead>
            <Steps>
              <Step><span>Removing lock cylinder <PageLink href="#page">⇒ page 98</PageLink> or removing cover cap<br />without lock cylinder <PageLink href="#page">⇒ page 99</PageLink></span></Step>
              <Step>Disconnect connector -2-.</Step>
              <Step>Remove bolts -5-.</Step>
            </Steps>
            <Note><InfoIcon />Note</Note>
            <Remark>If necessary, the cables can be detached from the door lock.</Remark>
            <Steps>
              <Step><span>Turn cable towards bearing bracket -3- -arrow d-, swing out of<br />mounting -arrow e- and pull out of door lock -arrow f-.</span></Step>
              <Step><span>Turn cable towards interior handle -4- -arrow a-, swing out of<br />mounting -arrow b- and pull out of door lock -arrow c-.</span></Step>
              <Step>Remove door lock -1- from door.</Step>
            </Steps>
            <Heading><span>2.9.2</span><span>Installing</span></Heading>
            <Figure><DoorLockDrawing /></Figure>
            <PageFoot>2. Door components<PageNumber>105</PageNumber></PageFoot>
          </Page>
        </Viewer>
      </Main>
    </App>
  );
}
